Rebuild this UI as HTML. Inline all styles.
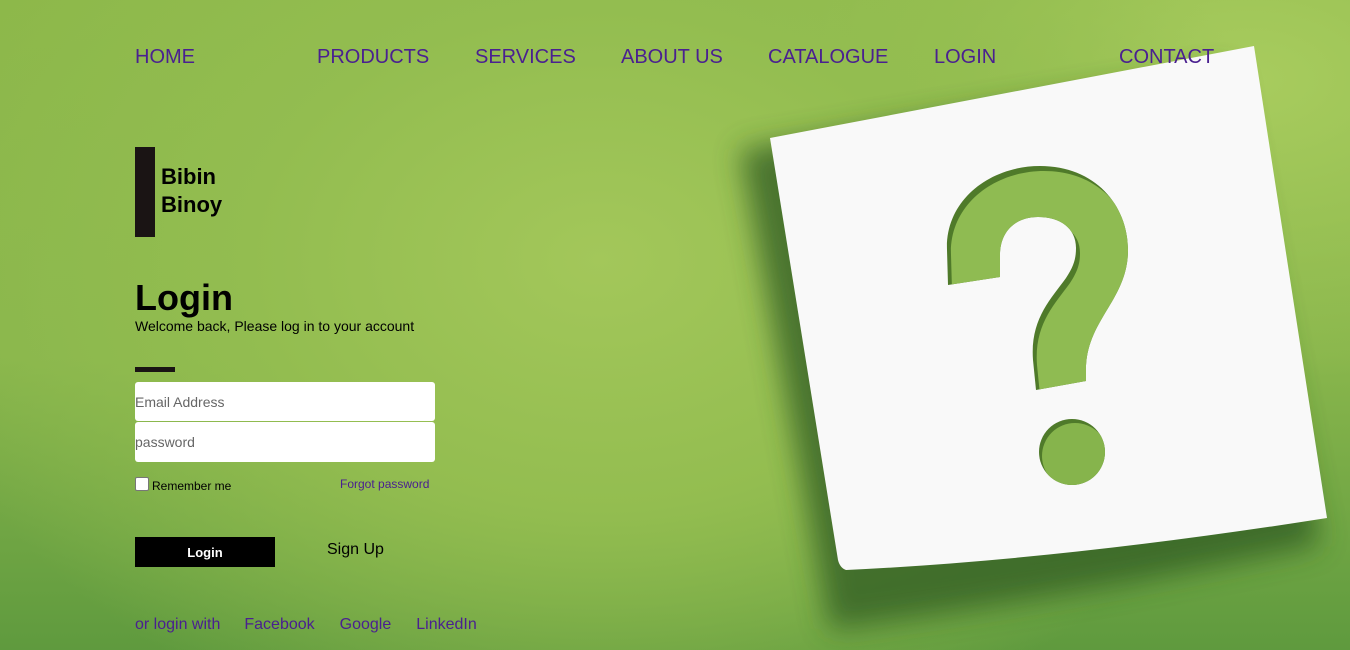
<!DOCTYPE html>
<html><head><style>
body{margin:0;width:1350px;height:650px;overflow:hidden;font-family:"Liberation Sans",Arial,sans-serif;
background:radial-gradient(ellipse 700px 500px at 600px 260px,#a3c75a 0%,#93bd50 50%,rgba(120,170,70,0) 100%),
radial-gradient(ellipse 500px 300px at 1250px 80px,#a8cc5e,rgba(0,0,0,0) 100%),
linear-gradient(180deg,#8db84a 0%,#89b64c 55%,#5f9a3e 100%);position:relative}
.nav a{position:absolute;top:46px;font-size:20px;color:#4a2090;text-decoration:none}
.abs{position:absolute}
input{box-sizing:border-box;border:none;border-radius:3px;background:#fff;font-size:14px;padding:0;font-family:"Liberation Sans",sans-serif}
</style></head><body>
<svg class="abs" style="left:0;top:0" width="1350" height="650">
<defs><filter id="b" x="-20%" y="-20%" width="140%" height="140%"><feGaussianBlur stdDeviation="14"/></filter>
<clipPath id="q"><path id="qp" d="M948,285 L947,250 C945,200 990,166 1040,166 C1095,166 1128,205 1128,250 C1128,300 1086,320 1086,370 L1086,381 L1036,390 L1033,360 C1030,320 1050,300 1066,278 C1074,266 1076,258 1076,248 C1076,228 1060,217 1038,217 C1015,217 1000,232 1000,255 L1000,277 Z"/></clipPath>
<clipPath id="d"><circle cx="1072" cy="452" r="33"/></clipPath></defs>
<path d="M740,150 L1230,70 L1320,545 Q1060,600 830,630 Z" fill="#2e5a20" opacity="0.75" filter="url(#b)"/>
<path d="M770,138 L1254,46 L1327,518 Q1060,560 846,570 Q840,568 838,560 Z" fill="#f9f9f9"/>
<g clip-path="url(#q)"><rect x="940" y="160" width="200" height="240" fill="#4f7a2a"/>
<path d="M948,285 L947,250 C945,200 990,166 1040,166 C1095,166 1128,205 1128,250 C1128,300 1086,320 1086,370 L1086,381 L1036,390 L1033,360 C1030,320 1050,300 1066,278 C1074,266 1076,258 1076,248 C1076,228 1060,217 1038,217 C1015,217 1000,232 1000,255 L1000,277 Z" transform="translate(4,5)" fill="#8fbb52"/></g>
<g clip-path="url(#d)"><rect x="1030" y="410" width="90" height="90" fill="#4f7a2a"/><circle cx="1075" cy="456" r="33" fill="#86b44c"/></g>
</svg>
<div class="nav">
<a style="left:135px">HOME</a><a style="left:317px">PRODUCTS</a><a style="left:475px">SERVICES</a><a style="left:621px">ABOUT US</a><a style="left:768px">CATALOGUE</a><a style="left:934px">LOGIN</a><a style="left:1119px">CONTACT</a>
</div>
<div class="abs" style="left:135px;top:147px;width:20px;height:90px;background:#1a1414"></div>
<div class="abs" style="left:161px;top:163px;font-size:22px;font-weight:bold;line-height:28px;color:#000">Bibin<br>Binoy</div>
<div class="abs" style="left:135px;top:277px;font-size:36px;font-weight:bold;color:#000">Login</div>
<div class="abs" style="left:135px;top:318px;font-size:14px;color:#000">Welcome back, Please log in to your account</div>
<div class="abs" style="left:135px;top:367px;width:40px;height:5px;background:#1a1414"></div>
<input class="abs" style="left:135px;top:382px;width:300px;height:39px;color:#666" value="Email Address">
<input class="abs" style="left:135px;top:422px;width:300px;height:40px;color:#666" value="password">
<div class="abs" style="left:135px;top:477px;width:12px;height:12px;border:1px solid #777;border-radius:2px;background:#fff"></div>
<div class="abs" style="left:152px;top:479px;font-size:12px;color:#000">Remember me</div>
<div class="abs" style="left:340px;top:477px;font-size:12px;color:#4a2090">Forgot password</div>
<div class="abs" style="left:135px;top:537px;width:140px;height:30px;background:#000;color:#fff;font-size:13px;font-weight:bold;text-align:center;line-height:31px">Login</div>
<div class="abs" style="left:327px;top:541px;font-size:16px;color:#000">Sign Up</div>
<div class="abs" style="left:135px;top:616px;font-size:16px;color:#4a2090">or login with<span style="margin-left:24px">Facebook</span><span style="margin-left:25px">Google</span><span style="margin-left:25px">LinkedIn</span></div>
</body></html>
